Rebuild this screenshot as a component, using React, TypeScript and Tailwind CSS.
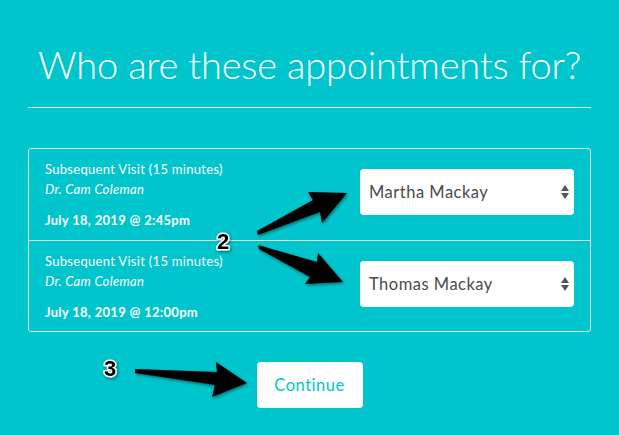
const ROWS = [
  { visit: "Subsequent Visit (15 minutes)", doctor: "Dr. Cam Coleman", when: "July 18, 2019 @ 2:45pm", patient: "Martha Mackay" },
  { visit: "Subsequent Visit (15 minutes)", doctor: "Dr. Cam Coleman", when: "July 18, 2019 @ 12:00pm", patient: "Thomas Mackay" },
];

function SelectArrows() {
  return (
    <svg width="10" height="16" viewBox="0 0 10 16" className="text-[#555]">
      <path d="M5 1 9 7H1Z M5 15 1 9h8Z" fill="currentColor" />
    </svg>
  );
}

export default function App() {
  return (
    <div className="relative h-[435px] w-[619px] overflow-hidden bg-[#00c5cd] font-['Lato','Open_Sans',sans-serif]">
      <div className="px-[28px]">
        <h1 className="pt-[41px] text-center text-[38px] font-light leading-[46px] tracking-[-0.2px] text-white">
          Who are these appointments for?
        </h1>
        <div className="mt-[20px] h-px bg-white/90" />

        <div className="mt-[40px] rounded-[3px] border border-[#dfe6e6]">
          {ROWS.map((r, i) => (
            <div
              key={r.patient}
              className={`flex h-[91px] items-start justify-between px-[16px] ${i > 0 ? "border-t border-[#dfe6e6]" : ""}`}
            >
              <div className="pt-[10px] text-[13px] leading-[20px] tracking-[0.3px] text-white">
                <div>{r.visit}</div>
                <div className="italic">{r.doctor}</div>
                <div className="mt-[11px] font-bold">{r.when}</div>
              </div>
              <div className="mt-[20px] flex h-[46px] w-[214px] items-center justify-between rounded-[4px] bg-white pl-[9px] pr-[4px] text-[16.5px] tracking-[0.5px] text-[#4a4a4a]">
                <span>{r.patient}</span>
                <SelectArrows />
              </div>
            </div>
          ))}
        </div>
      </div>

      <div className="mt-[30px] flex justify-center">
        <button className="h-[46px] w-[106px] rounded-[4px] bg-white text-[16.5px] tracking-[0.5px] text-[#00c5cd]">
          Continue
        </button>
      </div>

      <svg className="pointer-events-none absolute inset-0" width="619" height="435" viewBox="0 0 619 435">
        <defs>
          <filter id="sh" x="-20%" y="-20%" width="140%" height="140%">
            <feDropShadow dx="1" dy="1.5" stdDeviation="1.5" floodColor="#000" floodOpacity="0.45" />
          </filter>
        </defs>
        <g fill="#000" filter="url(#sh)">
          <path d="M257 231 313 200 308 192 347 193 322 223 320 212 258 235Z" />
          <path d="M258 245 317 262 318 253 343 282 305 284 310 277 259 249Z" />
          <path d="M135 369 217 372 216 362 247 383 212 397 215 385 135 373Z" />
        </g>
        <g
          fontFamily="'Liberation Sans', Arial, sans-serif"
          fontWeight="bold"
          fontSize="22"
          fill="#000"
          stroke="#fff"
          strokeWidth="3"
          strokeLinejoin="round"
          paintOrder="stroke"
          filter="url(#sh)"
        >
          <text x="217" y="249">2</text>
          <text x="104" y="376">3</text>
        </g>
      </svg>
    </div>
  );
}
